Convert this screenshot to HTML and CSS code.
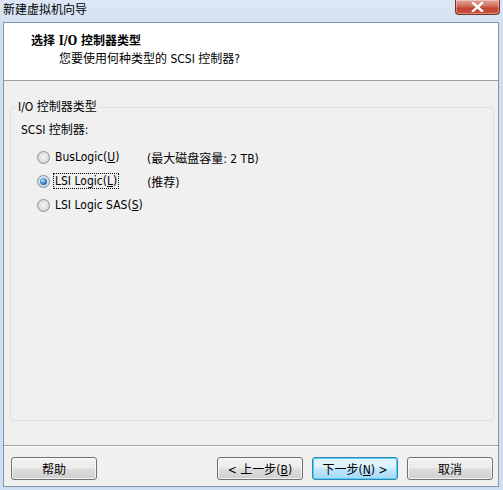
FILE: index.html
```html
<!DOCTYPE html>
<html lang="zh-CN">
<head>
<meta charset="utf-8">
<title>新建虚拟机向导</title>
<link rel="stylesheet" href="styles.css">
</head>
<body>
<div class="window">
  <div class="titlebar">
    <span class="title">新建虚拟机向导</span>
    <span class="close">
      <svg width="13" height="10" viewBox="0 0 13 10"><path d="M2 1 L11 9 M11 1 L2 9" stroke="#fff" stroke-width="2.4" stroke-linecap="square"/></svg>
    </span>
  </div>
  <div class="client">
    <div class="header">
      <div class="h-title">选择 I/O 控制器类型</div>
      <div class="h-sub">您要使用何种类型的 SCSI 控制器?</div>
    </div>
    <div class="body">
      <fieldset class="group">
        <legend class="legend">I/O 控制器类型</legend>
        <div class="sublabel">SCSI 控制器:</div>
        <div class="row">
          <span class="radio"></span>
          <span class="opt">BusLogic(<u>U</u>)</span>
          <span class="note">(最大磁盘容量: 2 TB)</span>
        </div>
        <div class="row">
          <span class="radio checked"><span class="dot"></span></span>
          <span class="opt focus">LSI Logic(<u>L</u>)</span>
          <span class="note">(推荐)</span>
        </div>
        <div class="row">
          <span class="radio"></span>
          <span class="opt">LSI Logic SAS(<u>S</u>)</span>
        </div>
      </fieldset>
    </div>
    <div class="footer">
      <button class="btn">帮助</button>
      <span class="spacer"></span>
      <button class="btn">&lt; 上一步(<u>B</u>)</button>
      <button class="btn default">下一步(<u>N</u>) &gt;</button>
      <button class="btn">取消</button>
    </div>
  </div>
</div>
</body>
</html>
```

FILE: styles.css
```css
* { box-sizing: border-box; }
html, body { margin: 0; padding: 0; }
body {
  width: 503px;
  height: 490px;
  overflow: hidden;
  font-family: "DejaVu Sans Condensed", "Noto Sans CJK SC", sans-serif;
  font-size: 12px;
  color: #000;
  background: #d4e2f1;
}
.window {
  width: 503px;
  height: 490px;
  display: flex;
  flex-direction: column;
  background: linear-gradient(#dce8f5, #d0dff0 30px, #cfdef0);
}
.titlebar {
  height: 22px;
  display: flex;
  align-items: flex-start;
  flex: none;
}
.title {
  font-family: "Noto Sans CJK SC", sans-serif;
  font-size: 12px;
  line-height: 16px;
  padding: 1px 0 0 3px;
  color: #000;
}
.close {
  margin-left: auto;
  margin-right: 3px;
  width: 45px;
  height: 15px;
  border: 1px solid #7b2f26;
  border-top: none;
  border-radius: 0 0 4px 4px;
  background: linear-gradient(#e4a397, #d07462 40%, #c0442f 60%, #c8543d);
  display: flex;
  align-items: center;
  justify-content: center;
  box-shadow: inset 0 0 0 1px rgba(255,255,255,0.35);
}
.close svg { display: block; }
.client {
  margin: 0 4px 3px 3px;
  height: 465px;
  border: 1px solid #8496ad;
  background: #f0f0f0;
  display: flex;
  flex-direction: column;
}
.header {
  height: 58px;
  flex: none;
  background: #fff;
  border-bottom: 1px solid #a0a0a0;
  padding-top: 10px;
}
.h-title {
  font-weight: bold;
  line-height: 16px;
  padding-left: 27px;
  font-family: "DejaVu Serif Condensed", "Noto Sans CJK SC", serif;
}
.h-sub {
  line-height: 16px;
  margin-top: 2px;
  padding-left: 55px;
}
.body {
  flex: 1;
  padding: 18px 4px 0 6px;
  border-bottom: 1px solid #a0a0a0;
  box-shadow: 0 1px 0 #fff;
}
.group {
  margin: 0;
  padding: 7px 0 0 5px;
  border: 1px solid #dae2e8;
  border-radius: 3px;
  height: 322px;
}
.legend {
  padding: 0 2px;
  line-height: 16px;
}
.sublabel {
  line-height: 16px;
  padding-left: 5px;
  margin-bottom: 7px;
}
.row {
  height: 24px;
  display: flex;
  align-items: center;
  padding-left: 21px;
}
.radio {
  width: 13px;
  height: 13px;
  border-radius: 50%;
  border: 1px solid #8e8f8f;
  background: radial-gradient(circle at 50% 45%, #f4f4f4, #d8d8d8 70%, #c8c8c8);
  display: flex;
  align-items: center;
  justify-content: center;
  flex: none;
}
.radio.checked { border-color: #6f90b2; }
.dot {
  width: 7px;
  height: 7px;
  border-radius: 50%;
  background: radial-gradient(circle at 40% 35%, #aee0ff, #2a74b8 60%, #174f8c);
}
.opt {
  margin-left: 3px;
  padding: 0 1px;
  line-height: 14px;
  border: 1px dotted transparent;
  width: 94px;
  white-space: nowrap;
}
.opt.focus {
  border-color: #000;
  width: auto;
  margin-right: 28px;
}
.note { margin-left: 0; white-space: nowrap; }
.footer {
  height: 40px;
  flex: none;
  display: flex;
  align-items: flex-start;
  padding: 11px 5px 0 7px;
  gap: 9px;
}
.spacer { flex: 1; }
.btn {
  width: 86px;
  height: 23px;
  padding: 0;
  font: inherit;
  color: #000;
  border: 1px solid #707070;
  border-radius: 3px;
  background: linear-gradient(#f2f2f2, #ebebeb 48%, #dddddd 52%, #cfcfcf);
  box-shadow: inset 0 0 0 1px rgba(255,255,255,0.7);
}
.btn.default {
  border-color: #3c7fb1;
  background: linear-gradient(#eaf6fd, #d9f0fc 48%, #bee6fd 52%, #a7d9f5);
  box-shadow: inset 0 0 0 1px #48d8fb;
}
```
